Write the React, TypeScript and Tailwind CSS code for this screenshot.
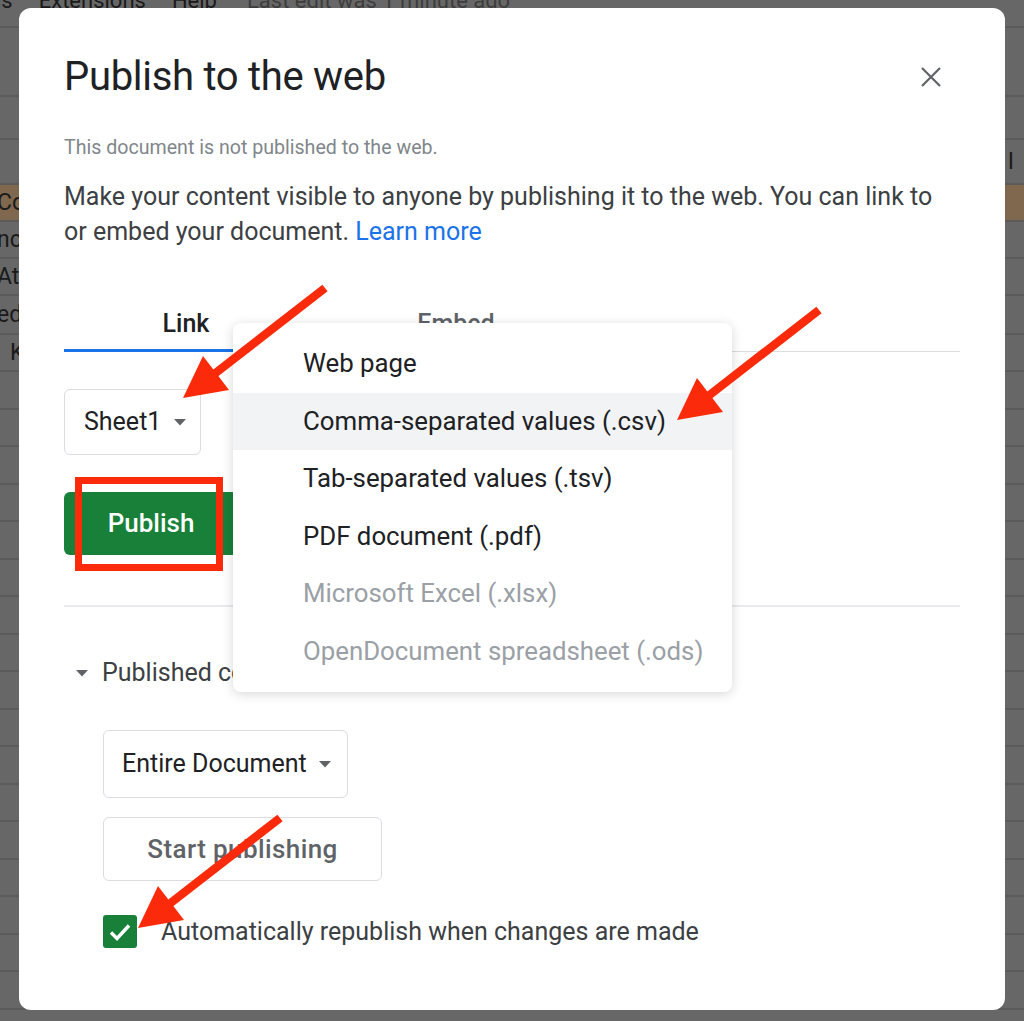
import React from "react";

const RED = "#fa2a0a";

function Arrow({ tipX, tipY }: { tipX: number; tipY: number }) {
  // tip at (0,0); start at (142,-110); wings at (20,-41) and (45,-8)
  return (
    <svg
      className="absolute z-30 pointer-events-none"
      style={{ left: tipX - 6, top: tipY - 118, width: 160, height: 124 }}
      viewBox="-6 -118 160 124"
    >
      <line x1="142" y1="-110" x2="30" y2="-23" stroke={RED} strokeWidth="8.5" strokeLinecap="butt" />
      <polygon points="0,0 20,-42 46,-8" fill={RED} />
    </svg>
  );
}

function Caret() {
  return (
    <svg width="12" height="7" viewBox="0 0 12 7" className="shrink-0">
      <polygon points="0,0 12,0 6,6.5" fill="#5f6368" />
    </svg>
  );
}

type Row = { h: number; left?: string; right?: string; brown?: boolean; indent?: boolean };

const rows: Row[] = [
  { h: 69 },
  { h: 43 },
  { h: 45, right: "I" },
  { h: 37, left: "Co", brown: true },
  { h: 37, left: "nc" },
  { h: 37, left: "At" },
  { h: 39, left: "ed" },
  { h: 37, left: "K", indent: true },
  ...Array.from({ length: 18 }, () => ({ h: 37.5 })),
];

function Backdrop() {
  return (
    <div className="absolute inset-0 flex flex-col bg-[#676767] overflow-hidden text-[#1a1a1a]">
      <div className="flex h-[28px] shrink-0 items-end gap-[26px] border-b-2 border-[#5b5b5b] pb-[12px] text-[22px] leading-[26px] whitespace-nowrap">
        <span className="ml-[-4px]">ls</span>
        <span>Extensions</span>
        <span>Help</span>
        <span className="ml-[4px] text-[#3d3d3d]">Last edit was 1 minute ago</span>
      </div>
      {rows.map((r, i) => (
        <div
          key={i}
          className={
            "flex shrink-0 items-center justify-between border-b-2 border-[#5b5b5b] text-[23px] leading-[28px] " +
            (r.brown ? "bg-[#80684f]" : "")
          }
          style={{ height: r.h }}
        >
          <span className={r.indent ? "pl-[10px]" : "ml-[-3px]"}>{r.left ?? ""}</span>
          <span className="pr-[10px]">{r.right ?? ""}</span>
        </div>
      ))}
    </div>
  );
}

export default function App() {
  const items: { label: string; disabled?: boolean; active?: boolean }[] = [
    { label: "Web page" },
    { label: "Comma-separated values (.csv)", active: true },
    { label: "Tab-separated values (.tsv)" },
    { label: "PDF document (.pdf)" },
    { label: "Microsoft Excel (.xlsx)", disabled: true },
    { label: "OpenDocument spreadsheet (.ods)", disabled: true },
  ];

  return (
    <div
      className="relative w-[1024px] h-[1021px] overflow-hidden"
      style={{ fontFamily: "Roboto, 'Liberation Sans', sans-serif" }}
    >
      <Backdrop />

      {/* Dialog */}
      <div className="relative z-10 ml-[19px] mt-[8px] flex w-[986px] h-[1002px] flex-col rounded-[12px] bg-white px-[45px] pt-[47px]">
        <div className="flex items-center justify-between">
          <h1 className="text-[40px] leading-[44px] text-[#202124] tracking-[-0.3px]">Publish to the web</h1>
          <svg width="20" height="20" viewBox="0 0 20 20" className="mr-[19px]">
            <path d="M1 1 L19 19 M19 1 L1 19" stroke="#5f6368" strokeWidth="2.2" />
          </svg>
        </div>

        <p className="mt-[37px] text-[19.6px] leading-[24px] text-[#80868b]">This document is not published to the web.</p>

        <p className="mt-[19px] text-[25px] leading-[35px] text-[#3c4043]">
          Make your content visible to anyone by publishing it to the web. You can link to
          <br />
          or embed your document. <span className="text-[#1a73e8]">Learn more</span>
        </p>

        {/* Tabs */}
        <div className="mt-[51px] flex h-[52px] border-b border-[#dadce0]">
          <div className="relative w-[244px] pt-[10px] text-center text-[25px] leading-[28px] font-medium text-[#202124]">
            Link
            <div className="absolute left-0 right-0 bottom-[-1px] h-[3px] bg-[#1a73e8]" />
          </div>
          <div className="w-[296px] pt-[10px] text-center text-[25px] leading-[28px] font-medium text-[#5f6368]">Embed</div>
        </div>

        {/* Sheet select */}
        <div className="mt-[37px] flex h-[66px] w-[137px] items-center gap-[13px] rounded-[6px] border border-[#dadce0] pl-[19px] text-[25px] text-[#202124]">
          Sheet1
          <Caret />
        </div>

        {/* Publish button */}
        <div className="mt-[37px] flex h-[63px] w-[174px] items-center justify-center rounded-[6px] bg-[#188038] text-[26px] font-medium text-white">
          Publish
        </div>

        <div className="mt-[50px] h-[2px] bg-[#e8eaed]" />

        <div className="mt-[53px] flex h-[26px] items-center gap-[14px] pl-[12px] text-[25px] text-[#3c4043]">
          <Caret />
          <span>Published content &amp; settings</span>
        </div>

        <div className="ml-[39px] mt-[44px] flex h-[68px] w-[245px] items-center gap-[12px] rounded-[6px] border border-[#dadce0] pl-[18px] text-[25px] text-[#202124]">
          Entire Document
          <Caret />
        </div>

        <div className="ml-[39px] mt-[19px] flex h-[64px] w-[279px] items-center justify-center rounded-[6px] border border-[#dadce0] text-[26px] font-medium tracking-[0.4px] text-[#5f6368]">
          Start publishing
        </div>

        <div className="ml-[39px] mt-[32px] flex items-center gap-[24px]">
          <div className="flex h-[33px] w-[34px] items-center justify-center rounded-[3px] bg-[#188038]">
            <svg width="24" height="20" viewBox="0 0 24 20">
              <path d="M3 10.5 L9 16.5 L21 3.5" fill="none" stroke="white" strokeWidth="3.4" />
            </svg>
          </div>
          <span className="text-[25px] text-[#3c4043]">Automatically republish when changes are made</span>
        </div>

        {/* Dropdown menu */}
        <div className="absolute left-[214px] top-[315px] z-20 w-[499px] rounded-[8px] bg-white py-[12px] shadow-[0_2px_12px_rgba(0,0,0,0.16)]">
          {items.map((it) => (
            <div
              key={it.label}
              className={
                "flex h-[57.5px] items-center pl-[70px] text-[25.8px] " +
                (it.active ? "bg-[#f1f3f4] " : "") +
                (it.disabled ? "text-[#9aa0a6]" : "text-[#202124]")
              }
            >
              {it.label}
            </div>
          ))}
        </div>
      </div>

      {/* Annotations */}
      <div className="absolute z-30 left-[75px] top-[477px] h-[94px] w-[148px] border-[7px] border-[#fa2a0a]" />
      <Arrow tipX={183} tipY={398} />
      <Arrow tipX={677} tipY={420} />
      <Arrow tipX={138} tipY={928} />
    </div>
  );
}
